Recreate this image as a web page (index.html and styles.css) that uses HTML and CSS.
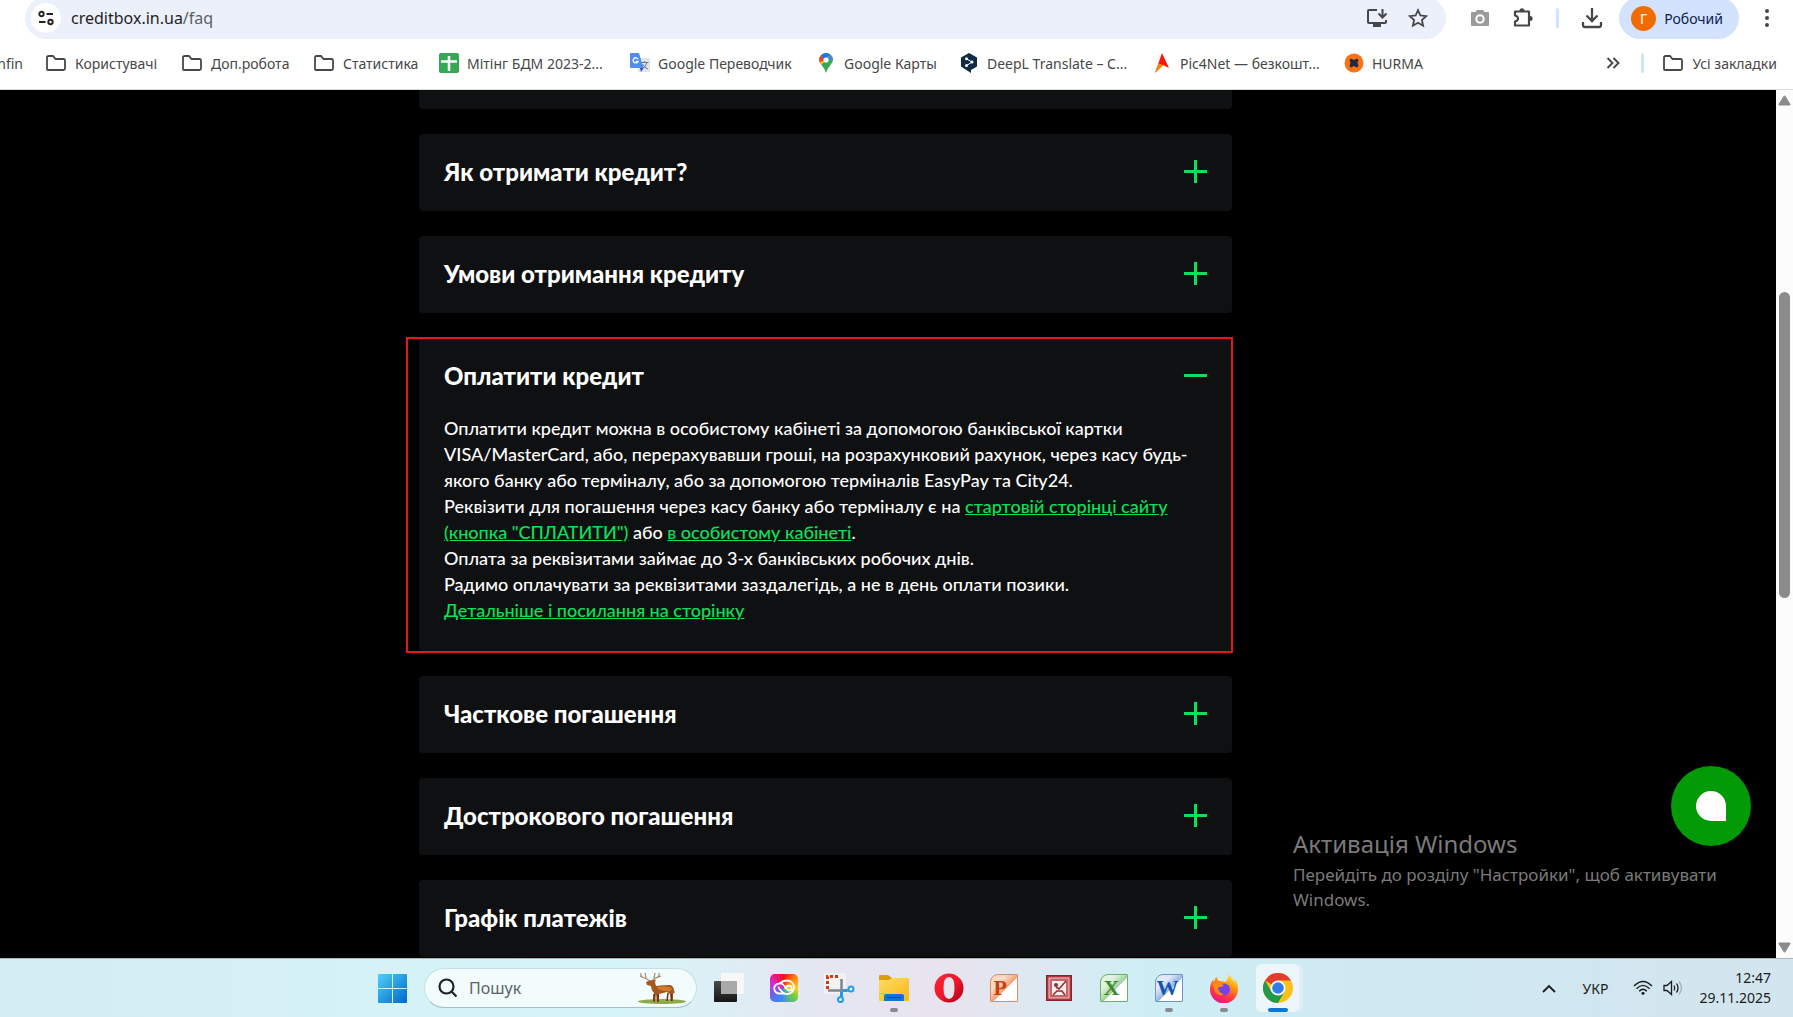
FILE: index.html
```html
<!DOCTYPE html>
<html lang="uk">
<head>
<meta charset="utf-8">
<title>creditbox.in.ua/faq</title>
<link rel="stylesheet" href="styles.css">
</head>
<body>
<svg class="defs" aria-hidden="true">
  <symbol id="folder" viewBox="0 0 22 18"><path d="M2 15V3.500Q2 2 3.500 2H8l2.500 3H18.500Q20 5 20 6.500V14.500Q20 16 18.500 16H3Q2 16 2 15Z" fill="none" stroke="#474747" stroke-width="1.800"/></symbol>
  <symbol id="plus" viewBox="0 0 23 23"><path d="M0 11.500H23M11.500 0V23" stroke="#0be05b" stroke-width="3"/></symbol>
  <symbol id="minus" viewBox="0 0 23 23"><path d="M0 11.500H23" stroke="#0be05b" stroke-width="3"/></symbol>
</svg>

<header class="browser">
  <div class="toolbar">
    <div class="omnibox">
      <button class="site-info" aria-label="Відомості про сайт">
        <svg width="16" height="16" viewBox="0 0 16 16" fill="none" stroke="#222" stroke-width="1.900"><circle cx="3.500" cy="4" r="2.200"/><path d="M8.500 4H15M1 12H7.500"/><circle cx="12.500" cy="12" r="2.200"/></svg>
      </button>
      <div class="url">creditbox.in.ua<span>/faq</span></div>
      <button class="tool" aria-label="Установити">
        <svg width="22" height="22" viewBox="0 0 22 22" fill="none" stroke="#474747" stroke-width="2"><path d="M11 3H3Q2 3 2 4V15Q2 16 3 16H19Q20 16 20 15V13"/><path d="M7 18.500H15" stroke-width="3"/><path d="M16.500 2V10M12.500 6.500L16.500 10.500L20.500 6.500"/></svg>
      </button>
      <button class="tool" aria-label="Додати закладку">
        <svg width="20" height="20" viewBox="0 0 20 20" fill="none" stroke="#474747" stroke-width="1.800"><path d="M10 2.200L12.400 7.500L18.200 8.100L13.900 12L15.100 17.700L10 14.800L4.900 17.700L6.100 12L1.800 8.100L7.600 7.500Z"/></svg>
      </button>
    </div>
    <div class="extensions">
      <button class="tool" aria-label="Знімок">
        <svg width="20" height="20" viewBox="0 0 20 20"><path d="M1 5Q1 4 2 4H5.500L7 2H13L14.500 4H18Q19 4 19 5V17Q19 18 18 18H2Q1 18 1 17Z" fill="#9b9b9b"/><circle cx="10" cy="11" r="4.700" fill="#fff"/><circle cx="10" cy="11" r="2.700" fill="#9b9b9b"/></svg>
      </button>
      <button class="tool" aria-label="Розширення">
        <svg width="22" height="22" viewBox="0 0 22 22"><path d="M3 4.500H17V18.500H3V14.500Q6 13.800 6 11.500Q6 9.200 3 8.500Z" fill="none" stroke="#474747" stroke-width="2.200" stroke-linejoin="round"/><path d="M7.500 4A2.500 2.700 0 0 1 12.500 4ZM18 9A2.700 2.500 0 0 1 18 14Z" fill="#474747"/></svg>
      </button>
      <i class="divider"></i>
      <button class="tool" aria-label="Завантаження">
        <svg width="22" height="22" viewBox="0 0 22 22" fill="none" stroke="#474747" stroke-width="2.300"><path d="M11 1V14M5.500 8.500L11 14L16.500 8.500M2 15V18Q2 20 4 20H18Q20 20 20 18V15"/></svg>
      </button>
      <button class="profile"><span class="avatar">Г</span>Робочий</button>
      <button class="tool" aria-label="Меню">
        <svg width="6" height="20" viewBox="0 0 6 20" fill="#474747"><circle cx="3" cy="3" r="2"/><circle cx="3" cy="10" r="2"/><circle cx="3" cy="17" r="2"/></svg>
      </button>
    </div>
  </div>
  <nav class="bookmarks">
    <a class="cut" href="#"><span>nfin</span></a>
    <a href="#"><svg width="22" height="18"><use href="#folder"/></svg>Користувачі</a>
    <a href="#"><svg width="22" height="18"><use href="#folder"/></svg>Доп.робота</a>
    <a href="#"><svg width="22" height="18"><use href="#folder"/></svg>Статистика</a>
    <a href="#"><svg width="20" height="20" viewBox="0 0 20 20"><rect width="20" height="20" rx="2" fill="#34a853"/><path d="M2 8.500H18M10 3V18" stroke="#fff" stroke-width="2.500"/></svg>Мітінг БДМ 2023-2...</a>
    <a href="#"><svg width="20" height="20" viewBox="0 0 20 20"><rect x="8" y="5" width="12" height="14" rx="1" fill="#e2e4e8"/><path d="M11 9.500H18.500M14.800 8V9.500M12 16Q16 14 17 9.500M12.500 11Q14 15 18 16" stroke="#607d8b" fill="none"/><path d="M1 0H9L13.500 15H1Q0 15 0 14V1Q0 0 1 0Z" fill="#4f8df5"/><path d="M10 15H13.500L11 19Z" fill="#3949ab"/><path d="M8 6A2.600 2.600 0 1 0 8.200 8.300H5.800" fill="none" stroke="#fff" stroke-width="1.300"/></svg>Google Переводчик</a>
    <a href="#"><svg width="20" height="20" viewBox="0 0 20 20"><path d="M10 20Q9 16 5.500 12Q3 9 3 7A7 7 0 0 1 17 7Q17 9 14.500 12Q11 16 10 20Z" fill="#34a853"/><path d="M3 7Q3 9 5.500 12L13 3L5 2.500Q3 4 3 7Z" fill="#fbbc04"/><path d="M10 7L5 2.500Q3 4.500 3 7L4 9Z" fill="#ea4335"/><path d="M5 2.500Q9-1.500 14 1.300L9 7Z" fill="#1a73e8"/><path d="M14 1.300Q17 3.500 17 7L12 7Z" fill="#4285f4"/><circle cx="10" cy="7" r="2.600" fill="#fff"/></svg>Google Карты</a>
    <a href="#"><svg width="20" height="20" viewBox="0 0 20 20"><path d="M10 0L18 4.500V13.500L12 17V20L2 13.500V4.500Z" fill="#0f2b46"/><path d="M7 5.500L13 9L7 13" fill="none" stroke="#fff"/><circle cx="7.500" cy="5.800" r="1.500" fill="#fff"/><circle cx="13" cy="9" r="1.500" fill="#fff"/><circle cx="7.500" cy="12.500" r="1.500" fill="#fff"/></svg>DeepL Translate – С...</a>
    <a href="#"><svg width="20" height="20" viewBox="0 0 20 20"><path d="M10 0L17 15L11 12L3 20Z" fill="#fb1607"/><path d="M6.500 10.500L11 12L3 20Z" fill="#ff8a00"/></svg>Pic4Net — безкошт...</a>
    <a href="#"><svg width="20" height="20" viewBox="0 0 20 20"><circle cx="10" cy="10" r="9.500" fill="#f97316"/><path d="M7 5.500L10 7L13 5.500L14.500 7L13.500 10L14.500 13L13 14.500L10 13L7 14.500L5.500 13L6.500 10L5.500 7Z" fill="#23283c"/></svg>HURMA</a>
    <button class="more" aria-label="Більше закладок"><svg width="14" height="12" viewBox="0 0 14 12" fill="none" stroke="#474747" stroke-width="1.900"><path d="M1.500 1L6.500 6L1.500 11M7.500 1L12.500 6L7.500 11"/></svg></button>
    <i class="divider"></i>
    <a class="all" href="#"><svg width="22" height="18"><use href="#folder"/></svg>Усі закладки</a>
  </nav>
</header>

<div class="viewport">
  <main class="page">
    <div class="faq">
      <section class="card stub"></section>
      <section class="card"><h2><button>Як отримати кредит?<svg width="23" height="23"><use href="#plus"/></svg></button></h2></section>
      <section class="card"><h2><button>Умови отримання кредиту<svg width="23" height="23"><use href="#plus"/></svg></button></h2></section>
      <section class="card open">
        <h2><button aria-expanded="true">Оплатити кредит<svg width="23" height="23"><use href="#minus"/></svg></button></h2>
        <p>Оплатити кредит можна в особистому кабінеті за допомогою банківської картки VISA/MasterCard, або, перерахувавши гроші, на розрахунковий рахунок, через касу будь-якого банку або терміналу, або за допомогою терміналів EasyPay та City24.<br>
        Реквізити для погашення через касу банку або терміналу є на <a href="#">стартовій сторінці сайту (кнопка "СПЛАТИТИ")</a> або <a href="#">в особистому кабінеті</a>.<br>
        Оплата за реквізитами займає до 3-х банківських робочих днів.<br>
        Радимо оплачувати за реквізитами заздалегідь, а не в день оплати позики.<br>
        <a href="#">Детальніше і посилання на сторінку</a></p>
      </section>
      <section class="card"><h2><button>Часткове погашення<svg width="23" height="23"><use href="#plus"/></svg></button></h2></section>
      <section class="card"><h2><button>Дострокового погашення<svg width="23" height="23"><use href="#plus"/></svg></button></h2></section>
      <section class="card"><h2><button>Графік платежів<svg width="23" height="23"><use href="#plus"/></svg></button></h2></section>
    </div>
    <button class="chat" aria-label="Чат"><i></i></button>
    <div class="activation">
      <strong>Активація Windows</strong>
      <span>Перейдіть до розділу "Настройки", щоб активувати Windows.</span>
    </div>
  </main>
  <div class="scrollbar">
    <svg width="13" height="11" viewBox="0 0 13 11"><path d="M6.500 1.500L11.500 9.500H1.500Z" fill="#8b8b8b" stroke="#8b8b8b" stroke-width="2" stroke-linejoin="round"/></svg>
    <div class="track"><div class="thumb"></div></div>
    <svg width="13" height="11" viewBox="0 0 13 11"><path d="M6.500 9.500L11.500 1.500H1.500Z" fill="#8b8b8b" stroke="#8b8b8b" stroke-width="2" stroke-linejoin="round"/></svg>
  </div>
</div>

<footer class="taskbar">
  <div class="apps">
    <button class="app" aria-label="Пуск"><svg width="29" height="29" viewBox="0 0 29 29"><defs><linearGradient id="win" x2="1" y2="1"><stop stop-color="#4fd0fb"/><stop offset="1" stop-color="#0067c8"/></linearGradient></defs><path d="M1 0H14V14H0V1Q0 0 1 0ZM15 0H28Q29 0 29 1V14H15ZM0 15H14V29H1Q0 29 0 28ZM15 15H29V28Q29 29 28 29H15Z" fill="url(#win)"/></svg></button>
    <label class="search">
      <svg width="20" height="20" viewBox="0 0 20 20" fill="none" stroke="#222" stroke-width="2.200"><circle cx="8.500" cy="8.500" r="7"/><path d="M13.500 13.500L18.500 18.500"/></svg>
      <input type="search" placeholder="Пошук" aria-label="Пошук">
      <svg width="50" height="32" viewBox="0 0 50 32"><ellipse cx="25" cy="29.500" rx="24" ry="2.500" fill="#8dab4a"/><path d="M4 1Q3 5 8 6L13 9M3 4L7 6M8 1L9 6M22 1Q23 5 18 6L15 9M24 4L19 6M18 1L17 6" stroke="#a08a70" stroke-width="1.200" fill="none"/><path d="M9 10L13 8.500L17 8L19 7.500L18 10L19 14Q25 13 33 13Q37 14 37 19L38 20L36 22V29H34L33 22L30 20L26 21L22 22V30H20L19 22L18 30H16L17 21Q14 18 14 14L10 13Z" fill="#a5551f"/><path d="M20 15Q28 13 35 16L34 19Q27 20 21 17Z" fill="#cf7a2c"/><path d="M17 22V29M21 22V30M34.500 22V29M31 21L30 29" stroke="#6b3014" stroke-width="1.500"/></svg>
    </label>
    <button class="app" aria-label="Подання завдань"><svg width="32" height="30" viewBox="0 0 32 30"><defs><linearGradient id="dk" x2="0" y2="1"><stop stop-color="#4b4b4b"/><stop offset="1" stop-color="#151515"/></linearGradient></defs><rect x="1" y="8" width="23" height="21" rx="1" fill="url(#dk)"/><rect x="8" y="0" width="23" height="21" rx="1" fill="#f7f7f7"/><path d="M8 8H24V21H8Z" fill="#a9a9a9"/></svg></button>
    <button class="app" aria-label="Creative Cloud"><i class="cc"><svg width="22" height="18" viewBox="0 0 22 18" fill="none" stroke="#fff" stroke-width="1.800"><path d="M12 14.500H6.500A5 5 0 0 1 6 4.500Q9 4 11 6.500L15 11Q17 12.500 18.500 10.500Q19.500 7 16 6.500Q14 6.500 11.500 9.500"/><path d="M7 4.500Q10 1.500 14 1.500A6.500 6.500 0 0 1 14.500 15Q11 15.500 9 12.500L7 10.500Q5 9 6 7.500"/></svg></i></button>
    <button class="app" aria-label="Ножиці"><svg width="32" height="32" viewBox="0 0 32 32"><rect x="1" y="1" width="22" height="21" rx="2" fill="#f2f1f3"/><path d="M4.500 17V4.500H17" fill="none" stroke="#d4380d" stroke-width="3" stroke-dasharray="3 2"/><path d="M18.500 7V26M5 18.500H26" stroke="#7b8790" stroke-width="2.500"/><path d="M18.500 20V24M20 18.500H24" stroke="#1e9bea" stroke-width="3"/><circle cx="17.500" cy="27.500" r="2.500" fill="#fff" stroke="#1e9bea" stroke-width="2"/><circle cx="28" cy="17" r="2.500" fill="#fff" stroke="#1e9bea" stroke-width="2"/></svg></button>
    <button class="app running" aria-label="Провідник"><svg width="30" height="28" viewBox="0 0 30 28"><defs><linearGradient id="fd" x2="1" y2="1"><stop stop-color="#ffdb63"/><stop offset="1" stop-color="#f8b916"/></linearGradient></defs><path d="M0 2Q0 1 1 1H9L13 4V8H0Z" fill="#dc9c0c"/><path d="M0 6H10L13 4H29Q30 4 30 5V26Q30 27 29 27H1Q0 27 0 26Z" fill="url(#fd)"/><path d="M5 27V22Q5 20 7 20H23Q25 20 25 22V27Z" fill="#0a78d4"/><path d="M8 23.500H22" stroke="#06498f" stroke-width="1.200"/></svg></button>
    <button class="app" aria-label="Opera"><svg width="30" height="30" viewBox="0 0 30 30"><defs><linearGradient id="op" x2="1" y2="1"><stop stop-color="#ff2538"/><stop offset=".5" stop-color="#f1182c"/><stop offset="1" stop-color="#a70014"/></linearGradient></defs><path d="M15 .500A14.500 14.500 0 1 0 15 29.500A14.500 14.500 0 1 0 15 .500ZM15 4Q20.500 4 20.500 15Q20.500 26 15 26Q9.500 26 9.500 15Q9.500 4 15 4Z" fill="url(#op)" fill-rule="evenodd"/></svg></button>
    <button class="app" aria-label="PowerPoint"><i class="office ppt">P</i></button>
    <button class="app" aria-label="Picture Manager"><svg width="26" height="26" viewBox="0 0 26 26"><rect x=".500" y=".500" width="25" height="25" fill="#a9343b" stroke="#8b2229"/><rect x="3" y="3" width="20" height="20" fill="#c96468" stroke="#efc9cb"/><path d="M6 6H20V20H6Z" fill="#fbeeee"/><circle cx="10" cy="10" r="2" fill="#9b2a31"/><path d="M20 6L13 14L10 12M7 20L11 16H16L19 20" fill="none" stroke="#9b2a31" stroke-width="1.600"/></svg></button>
    <button class="app" aria-label="Excel"><i class="office xls">X</i></button>
    <button class="app running" aria-label="Word"><i class="office doc">W</i></button>
    <button class="app running" aria-label="Firefox"><svg width="30" height="30" viewBox="0 0 30 30"><defs><linearGradient id="ff" x1=".8" y1="0" x2=".3" y2="1"><stop stop-color="#fff044"/><stop offset=".35" stop-color="#ff980e"/><stop offset=".7" stop-color="#ff3647"/><stop offset="1" stop-color="#e31587"/></linearGradient></defs><path d="M19 1Q24 5 25 9Q26 8 26 6Q29 10 29 16A14 14 0 0 1 1 17Q1 10 4 7L5 9Q6 4 8 4Q8 7 11 8Q15 8 16 9Q20 6 19 1Z" fill="url(#ff)"/><circle cx="15" cy="16.500" r="6" fill="#7542e5"/><path d="M3 10Q8 8 12 11L15 12Q12 15 9 14Q9 20 15 21Q10 24 6 19Z" fill="#ff8a16"/></svg></button>
    <button class="app active" aria-label="Chrome"><svg width="30" height="30" viewBox="0 0 30 30"><circle cx="15" cy="15" r="15" fill="#fbc116"/><path d="M15 15L2 7.500A15 15 0 0 1 28 7.500H15Z" fill="#e33b2e"/><path d="M2 7.500A15 15 0 0 0 15 30L21.500 18.700L8.500 18.700Z" fill="#229a48"/><circle cx="15" cy="15" r="7.500" fill="#fff"/><circle cx="15" cy="15" r="5.800" fill="#2f7de9"/></svg></button>
  </div>
  <div class="tray">
    <button aria-label="Приховані піктограми"><svg width="14" height="9" viewBox="0 0 14 9" fill="none" stroke="#1b1b1b" stroke-width="1.800"><path d="M1 8L7 2L13 8"/></svg></button>
    <button>УКР</button>
    <button class="status" aria-label="Мережа та звук">
      <svg width="20" height="16" viewBox="0 0 20 16" fill="none" stroke="#1b1b1b" stroke-width="1.400"><path d="M1 6Q10-3 19 6M3.500 8.800Q10 2 16.500 8.800M6.200 11.300Q10 7.200 13.800 11.300"/><circle cx="10" cy="13.300" r="1.500" fill="#1b1b1b" stroke="none"/></svg>
      <svg width="20" height="16" viewBox="0 0 20 16" fill="none" stroke="#1b1b1b" stroke-width="1.300"><path d="M1 5.500H4L8.500 1.500V14.500L4 10.500H1ZM11 5.500Q12.500 8 11 10.500M13.500 3.500Q16.500 8 13.500 12.500"/><path d="M16 1.500Q21 8 16 14.500" stroke="#9db0b8"/></svg>
    </button>
    <time datetime="2025-11-29T12:47">12:47<br>29.11.2025</time>
  </div>
</footer>
</body>
</html>
```
FILE: styles.css
```css
* { box-sizing: border-box; }

body {
  margin: 0;
  height: 100vh;
  display: flex;
  flex-direction: column;
  overflow: hidden;
  background: #000;
  font-family: "Noto Sans", sans-serif;
  font-size: 14px;
  color: #474747;
}

button {
  margin: 0;
  padding: 0;
  border: 0;
  background: none;
  font: inherit;
  color: inherit;
}

svg { display: block; flex: none; }
.defs { position: absolute; width: 0; height: 0; }

/* Browser chrome */
.browser {
  flex: none;
  background: #fff;
  border-bottom: 1px solid #d5dfd6;
}

.toolbar {
  display: flex;
  align-items: flex-end;
  height: 39px;
  padding-left: 25px;
  padding-right: 23px;
  overflow: hidden;
}

.omnibox {
  flex: 1;
  display: flex;
  align-items: center;
  height: 42px;
  padding: 0 18px 0 6px;
  border-radius: 21px;
  background: #ebf0fa;
}

.site-info {
  display: grid;
  place-items: center;
  width: 30px;
  height: 30px;
  border-radius: 50%;
  background: #fff;
}

.url {
  flex: 1;
  margin-left: 10px;
  font-size: 16px;
  color: #1f1f1f;
}
.url span { color: #5b5e63; }

.omnibox .tool + .tool { margin-left: 20px; }

.extensions {
  display: flex;
  align-items: center;
  gap: 22px;
  height: 42px;
  padding-left: 24px;
}

.divider {
  flex: none;
  width: 3px;
  height: 20px;
  border-radius: 2px;
  background: #d3e3fd;
}

.profile {
  display: flex;
  align-items: center;
  gap: 8px;
  height: 42px;
  margin-left: -6px;
  margin-right: 3px;
  padding: 0 16px 0 12px;
  border-radius: 21px;
  background: #d3e3fd;
  color: #0a2152;
}

.avatar {
  display: grid;
  place-items: center;
  width: 25px;
  height: 25px;
  border-radius: 50%;
  background: #f06c00;
  color: #fff;
}

.bookmarks {
  display: grid;
  grid-template-columns: 45px 136px 132px 126px 191px 186px 143px 193px 192px 1fr auto auto auto;
  align-items: center;
  height: 50px;
  padding-right: 16px;
  padding-bottom: 2px;
}
.bookmarks a {
  display: flex;
  align-items: center;
  gap: 8px;
  color: #474747;
  text-decoration: none;
  white-space: nowrap;
}
.bookmarks .cut { width: 23px; justify-content: flex-end; overflow: hidden; }
.bookmarks .more { margin-right: 21px; }
.bookmarks .all { margin-left: 18px; }

/* Page */
.viewport { flex: 1; display: flex; min-height: 0; }

.page {
  flex: 1;
  position: relative;
  display: grid;
  grid-template-columns: 419fr minmax(0, 813fr) 544fr;
  overflow: hidden;
}

.faq {
  grid-column: 2;
  display: flex;
  flex-direction: column;
  gap: 25px;
  font-family: Lato, sans-serif;
  color: #fff;
}

.card { flex: none; border-radius: 4px; background: #0f1011; }
.stub { height: 19px; border-radius: 0 0 4px 4px; }

.card h2 { margin: 0; font-size: 24px; font-weight: 900; }
.card h2 button {
  display: flex;
  align-items: center;
  justify-content: space-between;
  width: 100%;
  height: 77px;
  padding: 0 25px 2px;
  text-align: left;
}

.card p {
  margin: 0;
  padding: 0 14px 28px 25px;
  font-size: 18px;
  font-weight: 500;
  line-height: 26px;
}
.card a { color: #0be05b; }

.open { position: relative; }
.open::after {
  content: "";
  position: absolute;
  inset: -1px -1px -2px -13px;
  border: 2px solid #e2191c;
  pointer-events: none;
}

.chat {
  position: absolute;
  right: 25px;
  bottom: 112px;
  display: grid;
  place-items: center;
  width: 80px;
  height: 80px;
  border-radius: 50%;
  background: #029a06;
}
.chat i {
  width: 30px;
  height: 30px;
  border-radius: 50% 50% 0 50%;
  background: #fff;
}

.activation {
  position: absolute;
  right: 48px;
  bottom: 46px;
  width: 435px;
  color: #7a7a7a;
}
.activation strong {
  display: block;
  font-size: 24px;
  font-weight: 400;
  line-height: 36px;
}
.activation span { display: block; font-size: 17px; line-height: 25px; }

.scrollbar {
  flex: none;
  display: flex;
  flex-direction: column;
  align-items: center;
  width: 17px;
  padding: 5px 0;
  background: #fcfcfc;
}
.track { flex: 1; width: 11px; padding-top: 186px; }
.thumb {
  height: 47%;
  border-radius: 6px;
  background: #8b8b8b;
}

/* Taskbar */
.taskbar {
  flex: none;
  display: flex;
  justify-content: space-between;
  align-items: center;
  height: 59px;
  padding: 0 22px 0 365px;
  border-top: 1px solid #a9b6bd;
  background: linear-gradient(90deg, #d3edf2, #d6f5f8 35%, #e5e6f2 46%, #e8e4ef 53%, #ceeef5 64%, #cfe8f2 78%, #d3e5ee);
  color: #1b1b1b;
}

.apps { display: flex; align-items: center; }

.app {
  position: relative;
  display: grid;
  place-items: center;
  width: 55px;
  height: 48px;
}
.app.running::after,
.app.active::after {
  content: "";
  position: absolute;
  bottom: 0;
  left: 50%;
  width: 8px;
  height: 4px;
  margin-left: -4px;
  border-radius: 2px;
  background: #858b90;
}
.app.active {
  width: 43px;
  margin-left: 5px;
  border-radius: 5px;
  background: #ecf5f9;
  box-shadow: 5px 0 0 -1px #e0eff5;
}
.app.active::after { width: 20px; margin-left: -10px; background: #0a78d4; }

.search {
  display: flex;
  align-items: center;
  width: 273px;
  height: 40px;
  margin: 0 4px;
  padding: 0 9px 0 13px;
  border: 1px solid #c4dfe4;
  border-bottom-color: #a5c0c5;
  border-radius: 20px;
  background: #f3fcfd;
}
.search input {
  flex: 1;
  min-width: 0;
  margin-left: 11px;
  padding: 0;
  border: 0;
  background: none;
  font: 16px "Noto Sans", sans-serif;
}
.search input::placeholder { color: #5b6365; opacity: 1; }

.cc {
  display: grid;
  place-items: center;
  width: 28px;
  height: 28px;
  border-radius: 5px;
  background: conic-gradient(from 0deg, #f01515, #ff8a00 50deg, #ffd21c 90deg, #6fcf3c 130deg, #3b8df0 190deg, #5a6cf0 230deg, #d12be0 290deg, #f01560 330deg, #f01515);
}

.office {
  display: grid;
  justify-items: start;
  align-items: center;
  width: 28px;
  height: 28px;
  padding-left: 3px;
  border: 1px solid;
  border-radius: 8px 1px 1px 1px;
  font: 900 22px "Liberation Serif", serif;
}
.ppt { border-color: #d58d6c; background: linear-gradient(135deg, #fbd9c4 30%, #f3a071 55%, #fff 56%); color: #c8420f; }
.xls { border-color: #6fae6c; background: linear-gradient(135deg, #e0f1dc 30%, #9bd095 55%, #fff 56%); color: #3c8a2f; }
.doc { padding-left: 1px; border-color: #7391c6; background: linear-gradient(135deg, #dfe9f7 30%, #8fb4e4 55%, #fff 56%); color: #1554ad; }

.tray { display: flex; align-items: center; gap: 16px; }
.tray > button + button { margin-left: 11px; }
.tray .status { display: flex; gap: 10px; margin-left: 9px; }
.tray time { text-align: right; line-height: 20px; }
```
